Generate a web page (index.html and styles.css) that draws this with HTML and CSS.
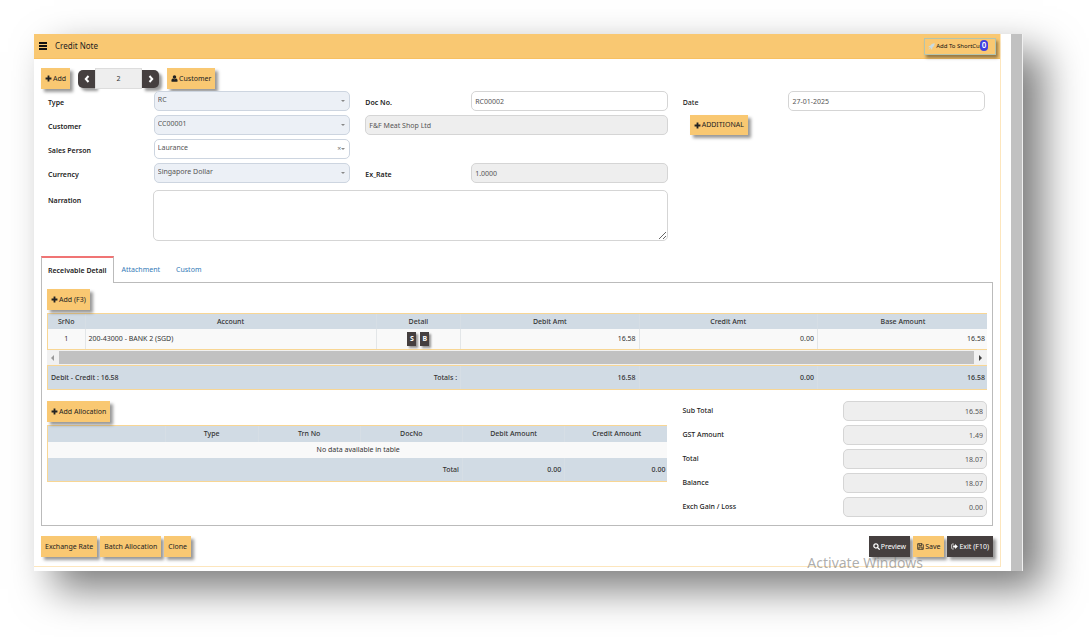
FILE: index.html
```html
<!doctype html>
<html lang="en">

<head>
    <meta charset="utf-8">
    <meta name="viewport" content="width=device-width, initial-scale=1">
    <title>Credit Note</title>
    <link rel="stylesheet" href="styles.css">
</head>

<body>
    <!-- shared icons -->
    <svg class="icon-defs" aria-hidden="true">
        <symbol id="i-plus" viewBox="0 0 10 10"><path d="M3.700.8h2.600v2.900h2.900v2.600H6.300v2.900H3.700V6.300H.8V3.700h2.900z" /></symbol>
        <symbol id="i-user" viewBox="0 0 10 10"><path d="M5 .3c1.500 0 2.400 1 2.400 2.500S6.300 5.500 5 5.500 2.600 4.300 2.600 2.800 3.500.3 5 .3zM2.800 5c.6.7 1.300 1 2.200 1s1.600-.3 2.200-1C8.800 5.200 9.400 6.600 9.400 8.500c0 .8-.5 1.300-1.300 1.300H1.900C1.100 9.800.6 9.300.6 8.500.6 6.600 1.200 5.200 2.800 5z" /></symbol>
        <symbol id="i-search" viewBox="0 0 10 10"><path d="M4.200 1.200a3 3 0 1 0 0 6 3 3 0 0 0 0-6zM6.500 6.500L9 9" fill="none" stroke="currentColor" stroke-width="1.800" stroke-linecap="round" /></symbol>
        <symbol id="i-save" viewBox="0 0 10 10"><path d="M1 1h6.300L9 2.700V9H1zM3 1v2.700h3.600V1M2.800 9V5.800h4.400V9" fill="none" stroke="currentColor" stroke-width="1.100" /></symbol>
        <symbol id="i-exit" viewBox="0 0 10 10"><path d="M4 1.500H2Q1 1.500 1 2.500v5q0 1 1 1h2" fill="none" stroke="currentColor" stroke-width="1.100" /><path d="M5.800 1.600L9.800 5 5.800 8.400V6.400H3V3.600h2.800z" /></symbol>
    </svg>

    <div class="window">
        <main class="page">
            <header class="title-bar">
                <button class="menu-btn" type="button" aria-label="Menu"><span></span><span></span><span></span></button>
                <h1>Credit Note</h1>
                <button class="shortcut-btn" type="button">
                    <svg class="rocket" viewBox="0 0 10 10"><path d="M9.500.5C6.500.5 4.500 2 3.300 4L1.500 4.300.5 6l2 .2L4 7.600l.3 2L6 8.500l.2-1.800C8.300 5.500 9.500 3.500 9.500.5zM1.700 7L.5 9.500 3 8.300z" /></svg>
                    Add To ShortCut<span class="badge">0</span>
                </button>
            </header>

            <div class="toolbar">
                <button class="btn" type="button"><svg class="icon"><use href="#i-plus" /></svg> Add</button>
                <div class="pager">
                    <button class="pager-btn prev" type="button" aria-label="Previous"><svg viewBox="0 0 6 8"><path d="M4.500 1L1.800 4l2.700 3" /></svg></button>
                    <input type="text" value="2" aria-label="Record" readonly>
                    <button class="pager-btn next" type="button" aria-label="Next"><svg viewBox="0 0 6 8"><path d="M1.500 1l2.700 3-2.700 3" /></svg></button>
                </div>
                <button class="btn" type="button"><svg class="icon"><use href="#i-user" /></svg> Customer</button>
            </div>

            <form class="form">
                <div class="field">
                    <label for="type">Type</label>
                    <div class="select-box"><select id="type" class="muted"><option>RC</option></select></div>
                </div>
                <div class="field">
                    <label for="docno">Doc No.</label>
                    <input id="docno" type="text" value="RC00002">
                </div>
                <div class="field">
                    <label for="date" class="plain">Date</label>
                    <input id="date" type="text" value="27-01-2025">
                </div>

                <div class="field">
                    <label for="customer">Customer</label>
                    <div class="select-box"><select id="customer" class="muted"><option>CC00001</option></select></div>
                </div>
                <input type="text" value="F&amp;F Meat Shop Ltd" aria-label="Customer name" readonly>
                <div class="additional">
                    <button class="btn" type="button"><svg class="icon"><use href="#i-plus" /></svg> ADDITIONAL</button>
                </div>

                <div class="field first">
                    <label for="sales">Sales Person</label>
                    <div class="select-box clearable"><select id="sales"><option>Laurance</option></select></div>
                </div>

                <div class="field first">
                    <label for="currency">Currency</label>
                    <div class="select-box"><select id="currency" class="muted"><option>Singapore Dollar</option></select></div>
                </div>
                <div class="field">
                    <label for="rate">Ex_Rate</label>
                    <input id="rate" type="text" value="1.0000" readonly>
                </div>

                <div class="field narration">
                    <label for="narration">Narration</label>
                    <textarea id="narration"></textarea>
                </div>
            </form>

            <nav class="tabs">
                <a class="active" href="#detail">Receivable Detail</a>
                <a href="#attachment">Attachment</a>
                <a href="#custom">Custom</a>
            </nav>

            <section class="panel" id="detail">
                <button class="btn" type="button"><svg class="icon"><use href="#i-plus" /></svg> Add (F3)</button>

                <table class="grid detail-grid">
                    <colgroup>
                        <col class="c-no"><col class="c-account"><col class="c-detail"><col class="c-amt"><col class="c-amt"><col>
                    </colgroup>
                    <thead>
                        <tr><th>SrNo</th><th>Account</th><th>Detail</th><th>Debit Amt</th><th>Credit Amt</th><th>Base Amount</th></tr>
                    </thead>
                    <tbody>
                        <tr>
                            <td class="center">1</td>
                            <td>200-43000 - BANK 2 (SGD)</td>
                            <td class="center"><button class="mini" type="button">S</button><button class="mini" type="button">B</button></td>
                            <td class="num">16.58</td>
                            <td class="num">0.00</td>
                            <td class="num">16.58</td>
                        </tr>
                    </tbody>
                </table>
                <div class="hscroll"><i class="arrow left"></i><div class="thumb"></div><i class="arrow right"></i></div>
                <table class="grid totals-grid">
                    <colgroup>
                        <col class="c-no"><col class="c-account"><col class="c-detail"><col class="c-amt"><col class="c-amt"><col>
                    </colgroup>
                    <tbody>
                        <tr>
                            <td colspan="3"><div class="totals-label"><span>Debit - Credit : 16.58</span><span>Totals :</span></div></td>
                            <td class="num">16.58</td>
                            <td class="num">0.00</td>
                            <td class="num">16.58</td>
                        </tr>
                    </tbody>
                </table>

                <div class="lower">
                    <div class="allocation">
                        <button class="btn" type="button"><svg class="icon"><use href="#i-plus" /></svg> Add Allocation</button>
                        <table class="grid alloc-grid">
                            <colgroup><col class="a-blank"><col class="a-type"><col><col><col><col></colgroup>
                            <thead>
                                <tr><th></th><th>Type</th><th>Trn No</th><th>DocNo</th><th>Debit Amount</th><th>Credit Amount</th></tr>
                            </thead>
                            <tbody>
                                <tr><td class="center" colspan="6">No data available in table</td></tr>
                            </tbody>
                            <tfoot>
                                <tr><td colspan="4" class="num">Total</td><td class="num">0.00</td><td class="num">0.00</td></tr>
                            </tfoot>
                        </table>
                    </div>

                    <div class="sums">
                        <label for="sub">Sub Total</label><input id="sub" type="text" value="16.58" readonly>
                        <label for="gst">GST Amount</label><input id="gst" type="text" value="1.49" readonly>
                        <label for="total">Total</label><input id="total" type="text" value="18.07" readonly>
                        <label for="balance">Balance</label><input id="balance" type="text" value="18.07" readonly>
                        <label for="gain">Exch Gain / Loss</label><input id="gain" type="text" value="0.00" readonly>
                    </div>
                </div>
            </section>

            <footer class="actions">
                <button class="btn" type="button">Exchange Rate</button>
                <button class="btn" type="button">Batch Allocation</button>
                <button class="btn" type="button">Clone</button>
                <button class="btn dark push" type="button"><svg class="icon"><use href="#i-search" /></svg> Preview</button>
                <button class="btn" type="button"><svg class="icon"><use href="#i-save" /></svg> Save</button>
                <button class="btn dark" type="button"><svg class="icon"><use href="#i-exit" /></svg> Exit (F10)</button>
            </footer>
        </main>
        <div class="vscroll"></div>
        <div class="watermark">Activate Windows</div>
    </div>
</body>

</html>
```
FILE: styles.css
```css
* {
    box-sizing: border-box;
}

body {
    margin: 0;
    padding: 34px 66px 66px 34px;
    background: #fff;
    color: #333;
    font: 7px/10px "Noto Sans", "Open Sans", sans-serif;
}

button,
input,
select,
textarea {
    font: inherit;
    color: inherit;
    margin: 0;
}

.icon-defs {
    display: none;
}

.window {
    position: relative;
    display: flex;
    background: #fff;
    box-shadow: 20px 18px 38px rgba(0, 0, 0, .52);
}

.page {
    flex: 1;
    min-width: 0;
    margin: 0 10px 4px 0;
    border: solid #fde6bd;
    border-width: 0 1px 1px 0;
}

.vscroll {
    width: 12px;
    background: #c1c1c1;
    border-right: 1px solid #f1f1f1;
}

/* title bar */
.title-bar {
    display: flex;
    align-items: center;
    height: 25px;
    padding: 0 4px 0 5px;
    background: #f9c872;
    border-bottom: 1px solid #f7c062;
}

.title-bar h1 {
    margin: 0 auto 0 8px;
    font-size: 8px;
    font-weight: 400;
    color: #222;
}

.menu-btn {
    display: grid;
    gap: 1px;
    padding: 0;
    width: 8px;
    border: 0;
    background: none;
}

.menu-btn span {
    height: 2px;
    background: #111;
}

.shortcut-btn {
    position: relative;
    display: flex;
    align-items: center;
    gap: 1px;
    height: 17px;
    padding: 0 12px 0 3px;
    background: #f9c872;
    border: 1px solid #b4c4ae;
    box-shadow: 2px 3px 3px rgba(0, 0, 0, .4);
    font-size: 6px;
    color: #111;
}

.rocket {
    width: 7px;
    height: 7px;
    fill: #c9dbe0;
}

.badge {
    position: absolute;
    top: 1px;
    right: 7px;
    width: 8px;
    height: 11px;
    border-radius: 4px;
    background: #4040e0;
    color: #fff;
    font-size: 8px;
    font-weight: 600;
    text-align: center;
}

/* buttons */
.btn {
    display: inline-flex;
    align-items: center;
    gap: 1px;
    height: 21px;
    padding: 0 4px;
    border: 0;
    background: #f9c872;
    box-shadow: 3px 3px 3px rgba(0, 0, 0, .4);
    color: #222;
    white-space: nowrap;
}

.btn.dark {
    background: #453f3f;
    color: #fff;
}

.icon {
    width: 7px;
    height: 7px;
    fill: currentColor;
}

.toolbar {
    display: flex;
    align-items: center;
    gap: 8px;
    padding: 9px 7px 2px;
}

.pager {
    display: flex;
    align-items: center;
}

.pager input {
    width: 47px;
    height: 21px;
    padding: 0;
    border: 1px solid #ddd;
    border-radius: 0;
    background: #eee;
    text-align: center;
}

.pager-btn {
    display: grid;
    place-items: center;
    width: 17px;
    height: 18px;
    padding: 0;
    border: 0;
    background: #453f3f;
    box-shadow: 3px 3px 3px rgba(0, 0, 0, .4);
}

.pager-btn.prev {
    border-radius: 5px 0 0 5px;
}

.pager-btn.next {
    border-radius: 0 5px 5px 0;
}

.pager-btn svg {
    width: 6px;
    height: 8px;
    fill: none;
    stroke: #fff;
    stroke-width: 2;
}

/* form */
.form {
    display: grid;
    grid-template-columns: repeat(3, minmax(0, 1fr));
    gap: 4px 15px;
    padding: 0 15px 0 14px;
}

.field {
    display: grid;
    grid-template-columns: 35% 65%;
    align-items: center;
}

.field.first {
    grid-column: 1;
}

.field label {
    padding-top: 4px;
    font-weight: 600;
    color: #222;
}

.field label.plain {
    font-weight: 500;
}

.form input,
.form select,
.form textarea,
.sums input {
    display: block;
    width: 100%;
    height: 20px;
    padding: 0 3px;
    border: 1px solid #d5d5d5;
    border-radius: 5px;
    background: #fff;
    color: #555;
    outline: 0;
}

.form input:read-only,
.sums input {
    background: #eee;
}

.form select {
    appearance: none;
    padding: 0 12px 2px 3px;
    border-color: #cdd5e0;
}

.form select.muted {
    background: #ecf0f6;
}

.select-box {
    position: relative;
}

.select-box::after {
    content: "";
    position: absolute;
    top: 9px;
    right: 5px;
    border: 2px solid transparent;
    border-top-color: #888;
    border-bottom: 0;
}

.select-box.clearable::before {
    content: "×";
    position: absolute;
    top: 5px;
    right: 9px;
    color: #777;
}

.additional {
    padding-left: 7px;
}

.additional .btn {
    height: 20px;
}

.field.narration {
    grid-column: span 2;
    grid-template-columns: 17% 83%;
    align-items: start;
    padding-top: 3px;
}

.narration label {
    padding-top: 6px;
}

.form textarea {
    height: 51px;
}

/* tabs */
.tabs {
    display: flex;
    padding: 15px 7px 0;
}

.tabs a {
    height: 26px;
    padding: 0 8px;
    line-height: 28px;
    color: #337ab7;
    text-decoration: none;
}

.tabs .active {
    position: relative;
    padding: 0 6px;
    margin-bottom: -1px;
    height: 27px;
    border: 1px solid #bbb;
    border-top: 2px solid #f07474;
    border-bottom: 0;
    background: #fff;
    color: #222;
    font-weight: 600;
    line-height: 26px;
}

.panel {
    margin: 0 7px;
    padding: 6px 5px 8px;
    border: 1px solid #bbb;
}

/* tables */
.grid {
    width: 100%;
    border-collapse: separate;
    border-spacing: 0;
    table-layout: fixed;
    border: solid #f8d694;
    border-width: 1px 0 1px 1px;
}

.grid th,
.grid td {
    padding: 0 3px;
    font-weight: 400;
    border-right: 1px solid #e3e6e8;
}

.grid th,
.totals-grid td,
.alloc-grid tfoot td {
    border-right-color: #d6dee5;
    font-weight: 500;
}

.grid td {
    background: #f9f9f9;
}

.grid th,
.grid.totals-grid td,
.grid.alloc-grid tfoot td {
    background: #d1dbe4;
}

.grid tr > :last-child {
    border-right: 0;
    padding-right: 2px;
}

.grid .num {
    text-align: right;
}

.grid .center {
    text-align: center;
}

.c-no { width: 4%; }
.c-account { width: 31%; }
.c-detail { width: 9%; }
.c-amt { width: 19%; }

.detail-grid {
    margin-top: 3px;
}

.detail-grid th {
    height: 15px;
}

.detail-grid td {
    height: 20px;
}

.totals-grid td,
.grid.alloc-grid tfoot td {
    height: 23px;
}

.totals-label {
    display: flex;
    justify-content: space-between;
}

.mini {
    width: 9px;
    height: 14px;
    margin: 0 2px;
    padding: 0;
    border: 0;
    background: #453f3f;
    box-shadow: 2px 2px 2px rgba(0, 0, 0, .4);
    color: #fff;
    font-weight: 700;
}

.hscroll {
    display: flex;
    align-items: center;
    height: 15px;
    background: #f1f1f1;
}

.hscroll .thumb {
    flex: 1;
    height: 13px;
    background: #c1c1c1;
}

.arrow {
    margin: 0 5px;
    border: 3px solid transparent;
}

.arrow.left {
    margin-left: 4px;
    border-left: 0;
    border-right-color: #999;
}

.arrow.right {
    border-right: 0;
    border-left-color: #444;
}

.lower {
    display: grid;
    grid-template-columns: 66% 1fr;
    gap: 15px;
    padding-top: 11px;
}

.alloc-grid {
    margin-top: 3px;
}

.alloc-grid th,
.alloc-grid td {
    height: 16px;
}

.a-blank { width: 19%; }
.a-type { width: 15%; }

.sums {
    display: grid;
    grid-template-columns: 1fr 144px;
    gap: 4px 0;
    align-items: center;
}

.sums label {
    font-weight: 500;
    color: #222;
}

.sums input {
    text-align: right;
}

/* footer */
.actions {
    display: flex;
    gap: 3px;
    padding: 10px 7px 9px;
}

.push {
    margin-left: auto;
}

.watermark {
    position: absolute;
    right: 100px;
    bottom: 0;
    color: rgba(120, 120, 120, .6);
    font-size: 14px;
    line-height: 16px;
    pointer-events: none;
}
```
